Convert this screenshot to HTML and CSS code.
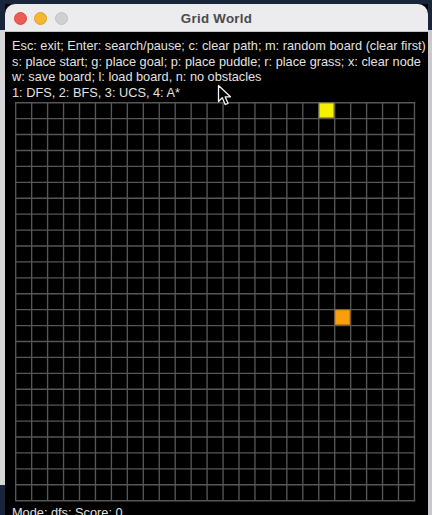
FILE: index.html
```html
<!DOCTYPE html>
<html lang="en">
<head>
<meta charset="utf-8">
<title>Grid World</title>
<link rel="stylesheet" href="styles.css">
</head>
<body>
<div class="desktop">
  <div class="side side-left"></div>
  <div class="window">
    <div class="titlebar">
      <div class="lights">
        <span class="light red"></span>
        <span class="light yellow"></span>
        <span class="light gray"></span>
      </div>
      <div class="title">Grid World</div>
    </div>
    <div class="content">
      <div class="help">
        <div class="line">Esc: exit; Enter: search/pause; c: clear path; m: random board (clear first)</div>
        <div class="line">s: place start; g: place goal; p: place puddle; r: place grass; x: clear node</div>
        <div class="line">w: save board; l: load board, n: no obstacles</div>
        <div class="line">1: DFS, 2: BFS, 3: UCS, 4: A*</div>
      </div>
      <svg class="board" width="401" height="400" viewBox="0 0 401 400">
        <path class="grid-lines" d="M0.7 0v399.5m15.95-399.5v399.5m15.95-399.5v399.5m15.95-399.5v399.5m15.95-399.5v399.5m15.95-399.5v399.5m15.95-399.5v399.5m15.95-399.5v399.5m15.95-399.5v399.5m15.95-399.5v399.5m15.95-399.5v399.5m15.95-399.5v399.5m15.95-399.5v399.5m15.95-399.5v399.5m15.95-399.5v399.5m15.95-399.5v399.5m15.95-399.5v399.5m15.95-399.5v399.5m15.95-399.5v399.5m15.95-399.5v399.5m15.95-399.5v399.5m15.95-399.5v399.5m15.95-399.5v399.5m15.95-399.5v399.5m15.95-399.5v399.5m15.95-399.5v399.5M0 0.7h400.3m-400.3 15.92h400.3m-400.3 15.92h400.3m-400.3 15.92h400.3m-400.3 15.92h400.3m-400.3 15.92h400.3m-400.3 15.92h400.3m-400.3 15.92h400.3m-400.3 15.92h400.3m-400.3 15.92h400.3m-400.3 15.92h400.3m-400.3 15.92h400.3m-400.3 15.92h400.3m-400.3 15.92h400.3m-400.3 15.92h400.3m-400.3 15.92h400.3m-400.3 15.92h400.3m-400.3 15.92h400.3m-400.3 15.92h400.3m-400.3 15.92h400.3m-400.3 15.92h400.3m-400.3 15.92h400.3m-400.3 15.92h400.3m-400.3 15.92h400.3m-400.3 15.92h400.3m-400.3 15.92h400.3"/>
        <rect class="cell-start" x="304.2" y="1.1" width="14.6" height="14.6"/>
        <rect class="cell-goal" x="320" y="207.9" width="15" height="15"/>
      </svg>
      <div class="status">Mode: dfs; Score: 0</div>
    </div>
  </div>
  <div class="side side-right"></div>
  <svg class="cursor" width="16" height="23" viewBox="0 0 16 23">
    <path d="M1.5 1.5 L1.5 17.5 L5.3 13.8 L8.2 20.5 L11 19.3 L8.2 12.8 L13.5 12.8 Z" fill="#000" stroke="#f2f2f2" stroke-width="1.3" stroke-linejoin="round"/>
  </svg>
</div>
</body>
</html>
```
FILE: styles.css
```css
html, body {
  margin: 0;
  padding: 0;
}
body {
  width: 432px;
  height: 515px;
  overflow: hidden;
  background: #18253b;
}
.desktop {
  position: relative;
  display: flex;
  width: 432px;
  height: 515px;
  padding-top: 4px;
  box-sizing: border-box;
  background: #18253b;
  overflow: hidden;
}
.side {
  margin-top: 26px;
  height: 455px;
}
.side-left {
  width: 5px;
  background: #d6d6d8;
}
.side-right {
  width: 4px;
  background: #c9cacd;
  height: 490px;
}
.window {
  width: 423px;
  display: flex;
  flex-direction: column;
  background: #000;
}
.titlebar {
  position: relative;
  height: 28px;
  flex: none;
  display: flex;
  align-items: center;
  background: #ecebee;
  border-radius: 10px 10px 0 0;
  border-bottom: 1px solid #c4c4c6;
  box-sizing: border-box;
}
.lights {
  display: flex;
  gap: 7.7px;
  padding-left: 8.5px;
  padding-top: 1px;
}
.light {
  width: 13px;
  height: 13px;
  border-radius: 50%;
  box-sizing: border-box;
}
.light.red {
  background: #ee5b55;
  border: 0.5px solid #d94b45;
}
.light.yellow {
  background: #f6b730;
  border: 0.5px solid #dea126;
}
.light.gray {
  background: #d0cfd2;
  border: 0.5px solid #c2c1c4;
}
.title {
  position: absolute;
  left: 0;
  right: 0;
  top: 0;
  bottom: 0;
  display: flex;
  align-items: center;
  justify-content: center;
  font-family: "Liberation Sans", Arial, sans-serif;
  font-weight: bold;
  font-size: 13.3px;
  letter-spacing: 0.3px;
  color: #4b4a4c;
  padding-top: 1px;
}
.content {
  flex: 1;
  display: flex;
  flex-direction: column;
  padding: 6.3px 0 0 7px;
  overflow: hidden;
  font-family: "Liberation Sans", Arial, sans-serif;
  font-size: 12.75px;
  line-height: 15.4px;
  color: #e2e2e2;
}
.help .line {
  white-space: nowrap;
}
.board {
  display: block;
  flex: none;
  margin: 1.6px 0 0 3.3px;
}
.grid-lines {
  fill: none;
  stroke: #565656;
  stroke-width: 1.35;
}
.cell-start {
  fill: #f6f000;
  stroke: #a9a312;
  stroke-width: 0.8;
}
.cell-goal {
  fill: #fb9e0c;
  stroke: #a8680c;
  stroke-width: 0.8;
}
.status {
  margin-top: 3px;
  white-space: nowrap;
}
.cursor {
  position: absolute;
  left: 216.5px;
  top: 83.5px;
}
```
